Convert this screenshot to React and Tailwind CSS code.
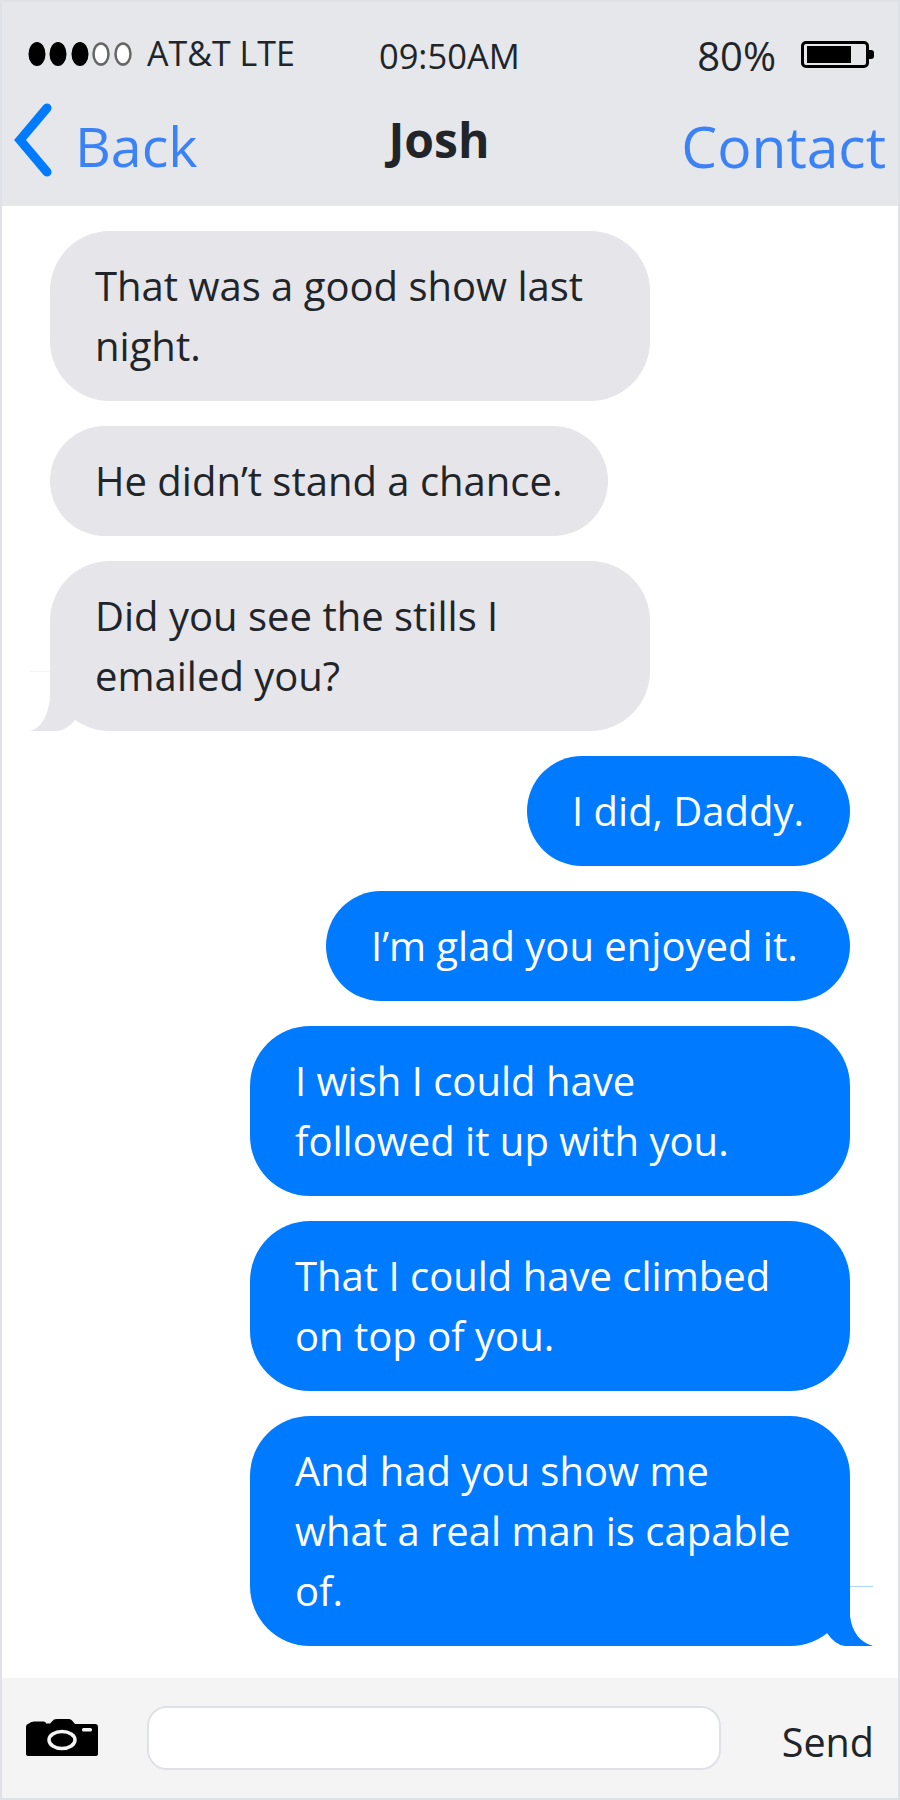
const incoming = 'bg-[#e5e5ea] text-[#212529]';
const outgoing = 'bg-[#007bff] text-white';

const messages = [
  { lines: ['That was a good show last', 'night.'], cls: `${incoming} w-[600px] self-start` },
  { lines: ['He didn’t stand a chance.'], cls: `${incoming} w-[558px] self-start` },
  { lines: ['Did you see the stills I', 'emailed you?'], cls: `${incoming} w-[600px] self-start`, tail: 'left' },
  { lines: ['I did, Daddy.'], cls: `${outgoing} w-[323px] self-end` },
  { lines: ['I’m glad you enjoyed it.'], cls: `${outgoing} w-[524px] self-end` },
  { lines: ['I wish I could have', 'followed it up with you.'], cls: `${outgoing} w-[600px] self-end` },
  { lines: ['That I could have climbed', 'on top of you.'], cls: `${outgoing} w-[600px] self-end` },
  { lines: ['And had you show me', 'what a real man is capable', 'of.'], cls: `${outgoing} w-[600px] self-end`, tail: 'right' },
];

function Signal() {
  return (
    <svg width="106" height="26" viewBox="0 0 106 26" className="blur-[0.6px]">
      {[9, 30, 52].map((x) => (
        <ellipse key={x} cx={x} cy="13" rx="8.500" ry="12" fill="#000" />
      ))}
      {[73, 95].map((x) => (
        <ellipse key={x} cx={x} cy="13" rx="7.500" ry="10.500" fill="#fff" stroke="#666" strokeWidth="2.500" />
      ))}
    </svg>
  );
}

function Battery() {
  return (
    <svg width="73" height="28" viewBox="0 0 73 28">
      <rect x="1.500" y="1.500" width="65" height="24" rx="3.500" fill="none" stroke="#000" strokeWidth="3" />
      <rect x="6" y="5" width="44" height="17" fill="#000" />
      <path d="M68 9h2a3 3 0 0 1 3 3v3a3 3 0 0 1-3 3h-2z" fill="#000" />
    </svg>
  );
}

function Camera() {
  return (
    <svg width="72" height="38" viewBox="0 0 72 38">
      <path
        d="M3 4.500 Q4 3 8 2.500 H17 Q20 2.500 20 4.500 H24 L28 .5 Q29 0 31 0 H43 Q45 0 46 1.500 L49 5 H69 Q72 5 72 8 V35 Q72 37 69 37 H3 Q0 37 0 35 V8 Q0 5 3 4.500 Z"
        fill="#000"
      />
      <ellipse cx="36" cy="21" rx="13" ry="8.500" fill="none" stroke="#f4f4f5" strokeWidth="3.500" />
      <rect x="56" y="9" width="10" height="3.500" rx="1.500" fill="#f4f4f5" />
    </svg>
  );
}

function Tail({ side }) {
  if (side === 'left') {
    return (
      <svg width="46" height="60" viewBox="0 0 46 60" className="absolute bottom-0 left-[-20px]">
        <path d="M0 .5H20" stroke="#e5e5ea" strokeOpacity="0.35" />
        <path d="M20 0V28Q16 56 0 60H28Q38 58 45 49V0Z" fill="#e5e5ea" />
      </svg>
    );
  }
  return (
    <svg width="48" height="60" viewBox="0 0 48 60" className="absolute bottom-0 right-[-23px]">
      <path d="M25 .5H48" stroke="#007bff" strokeOpacity="0.3" />
      <path d="M25 0V30Q28 54 48 60H20Q10 59 2 47V0Z" fill="#007bff" />
    </svg>
  );
}

export default function App() {
  return (
    <div className="flex h-[1800px] w-[900px] flex-col border-2 border-[#dee2e6] bg-white font-['Open_Sans',sans-serif] text-[#212529]">
      <header className="h-[204px] shrink-0 bg-[#e5e7eb]">
        <div className="flex h-[104px] items-center pl-[26px] pr-[24px]">
          <Signal />
          <span className="ml-[13px] mt-[-3px] text-[34px] leading-none">AT&amp;T LTE</span>
          <span className="ml-[84px] mt-[4px] text-[34.500px] leading-none">09:50AM</span>
          <span className="ml-auto mt-[4px] text-[40px] leading-none">80%</span>
          <span className="ml-[25px] mt-[2px]"><Battery /></span>
        </div>
        <div className="flex h-[100px] items-start pl-[12px] pr-[12px]">
          <svg width="38" height="74" viewBox="0 0 38 74" className="mt-[-3px]">
            <path d="M33 5 6 37l27 32" fill="none" stroke="#007bff" strokeWidth="9" strokeLinecap="round" strokeLinejoin="miter" />
          </svg>
          <span className="ml-[23px] mt-[-5px] text-[55.500px] leading-[90px] text-[#3b82f6]">Back</span>
          <span className="ml-[191px] mt-[-2px] text-[48px] font-bold leading-[72px]">Josh</span>
          <span className="ml-auto mt-[-5px] text-[57px] leading-[90px] text-[#3b82f6]">Contact</span>
        </div>
      </header>

      <main className="flex flex-1 flex-col gap-[25px] px-[48px] pt-[25px]">
        {messages.map((m) => (
          <div key={m.lines[0]} className={`relative rounded-[60px] px-[45px] py-[25px] text-[40px] leading-[60px] ${m.cls}`}>
            {m.tail && <Tail side={m.tail} />}
            <div className="relative">
              {m.lines.map((line) => (
                <div key={line} className="whitespace-nowrap">{line}</div>
              ))}
            </div>
          </div>
        ))}
      </main>

      <footer className="flex h-[120px] shrink-0 items-center bg-[#f4f4f5] pl-[24px] pr-[24px]">
        <Camera />
        <div className="ml-[49px] h-[64px] w-[574px] rounded-[20px] border-2 border-[#dee2e6] bg-white" />
        <span className="ml-auto mt-[10px] text-[39.500px] leading-none">Send</span>
      </footer>
    </div>
  );
}
